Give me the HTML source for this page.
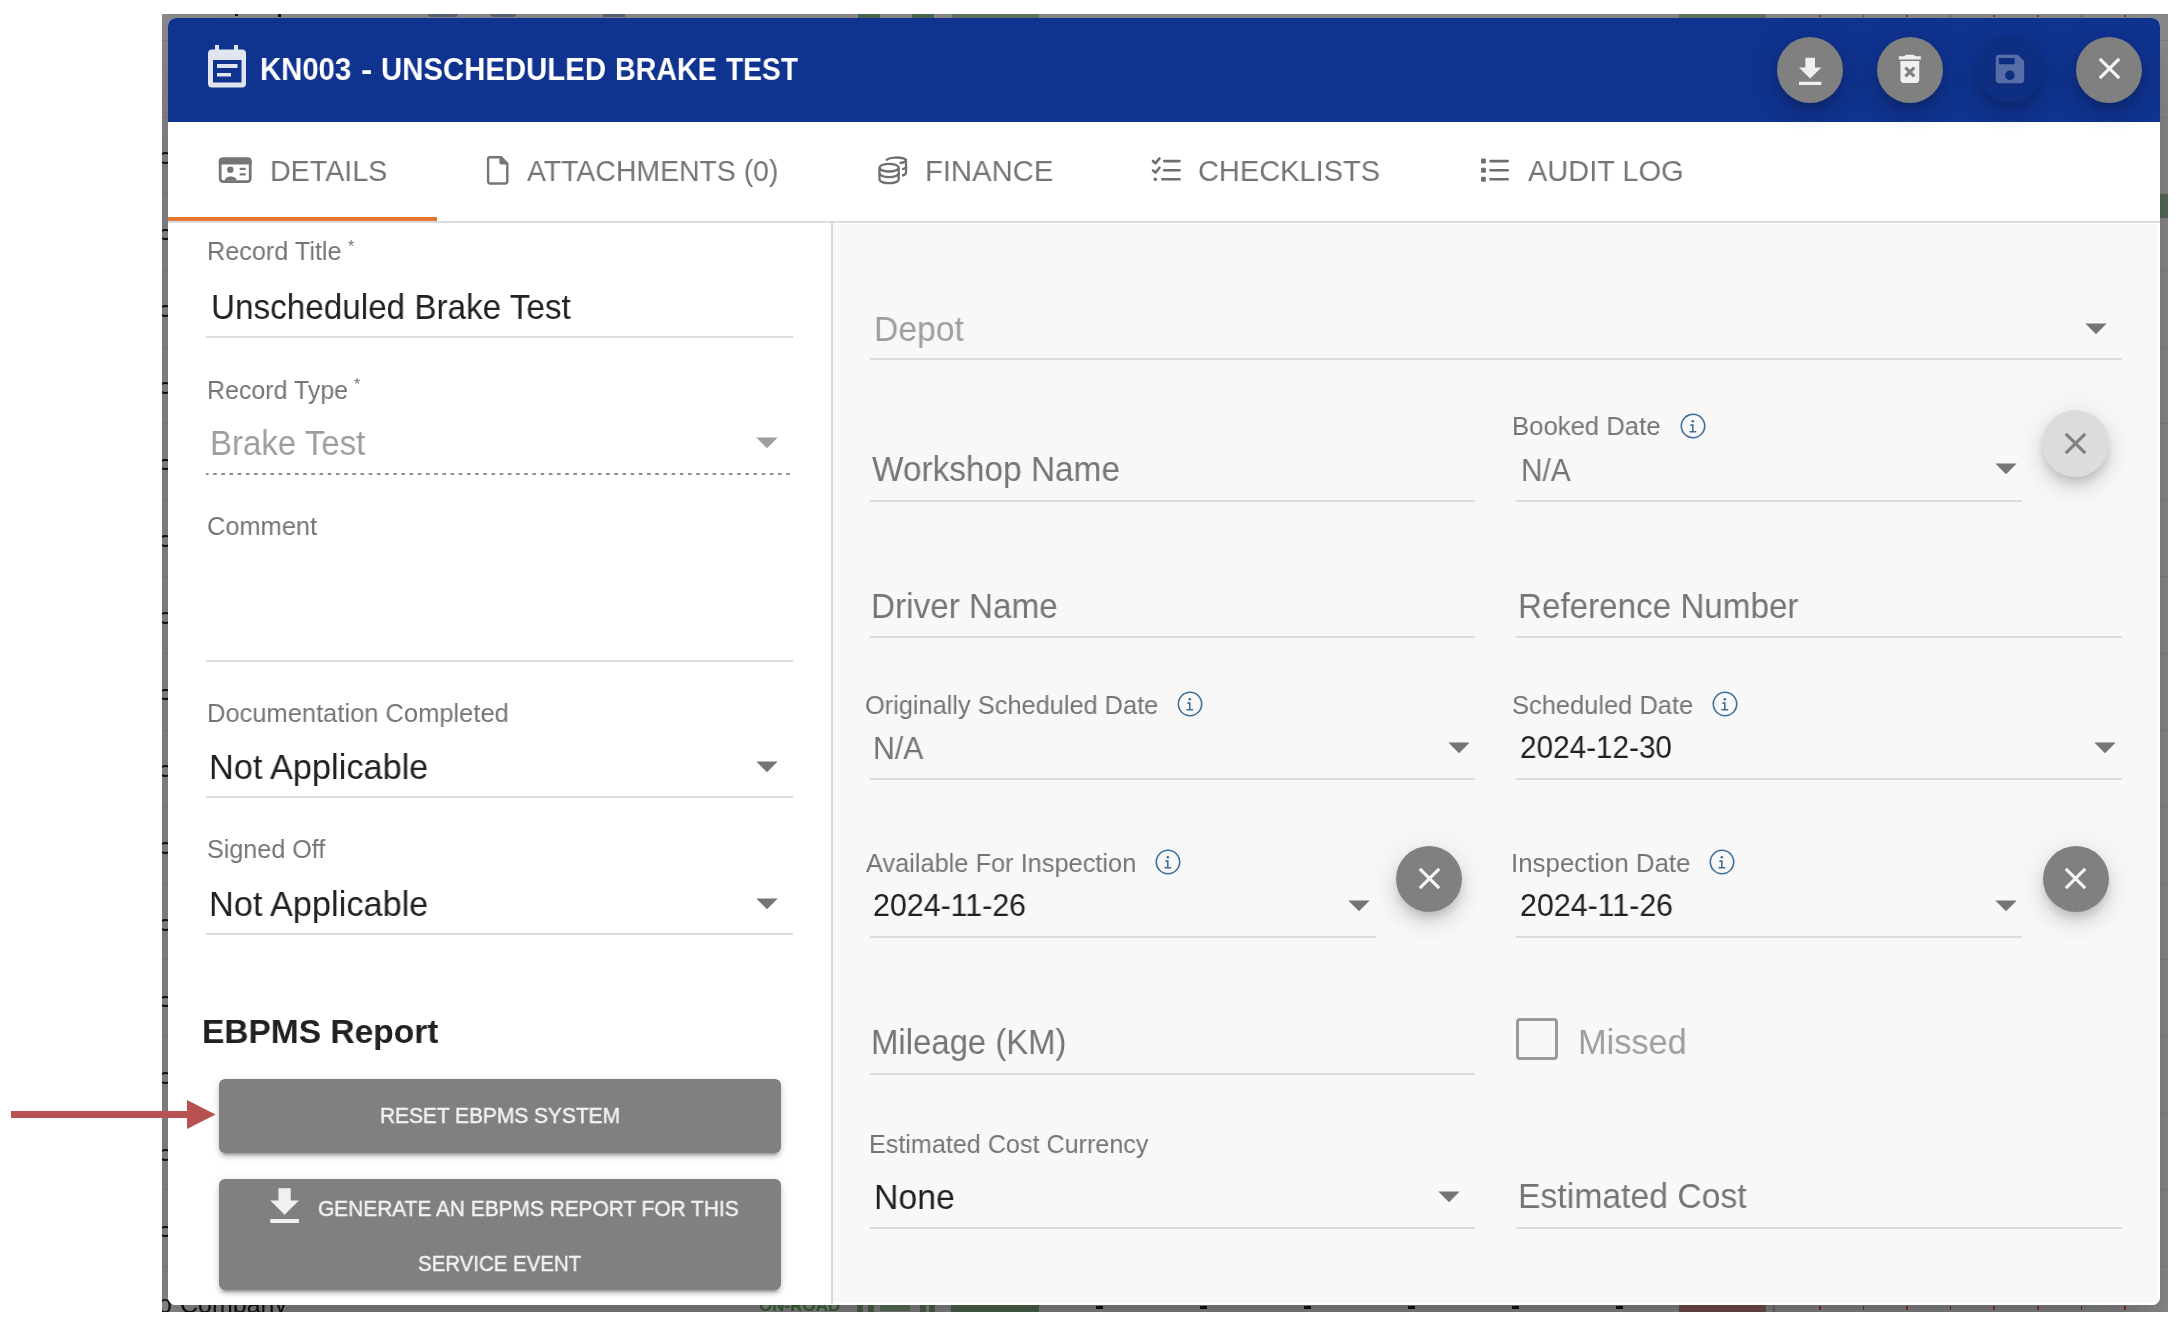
<!DOCTYPE html>
<html><head><meta charset="utf-8"><style>
html,body{margin:0;padding:0;background:#fff;width:2178px;height:1322px;overflow:hidden;}
body{position:relative;font-family:"Liberation Sans", sans-serif;}
.t{position:absolute;white-space:nowrap;will-change:transform;}
.r{position:absolute;}
</style></head><body>
<div class="r" style="left:162px;top:14px;width:2006px;height:1298px;overflow:hidden;background:#8c8c8c;"><div class="r" style="left:0.0px;top:26.1px;width:2006px;height:1.2px;background:rgba(0,0,0,0.07);"></div>
<div class="r" style="left:0.0px;top:102.7px;width:2006px;height:1.2px;background:rgba(0,0,0,0.07);"></div>
<div class="r" style="left:0.0px;top:179.3px;width:2006px;height:1.2px;background:rgba(0,0,0,0.07);"></div>
<div class="r" style="left:0.0px;top:255.9px;width:2006px;height:1.2px;background:rgba(0,0,0,0.07);"></div>
<div class="r" style="left:0.0px;top:332.5px;width:2006px;height:1.2px;background:rgba(0,0,0,0.07);"></div>
<div class="r" style="left:0.0px;top:409.1px;width:2006px;height:1.2px;background:rgba(0,0,0,0.07);"></div>
<div class="r" style="left:0.0px;top:485.7px;width:2006px;height:1.2px;background:rgba(0,0,0,0.07);"></div>
<div class="r" style="left:0.0px;top:562.3px;width:2006px;height:1.2px;background:rgba(0,0,0,0.07);"></div>
<div class="r" style="left:0.0px;top:638.9px;width:2006px;height:1.2px;background:rgba(0,0,0,0.07);"></div>
<div class="r" style="left:0.0px;top:715.5px;width:2006px;height:1.2px;background:rgba(0,0,0,0.07);"></div>
<div class="r" style="left:0.0px;top:792.1px;width:2006px;height:1.2px;background:rgba(0,0,0,0.07);"></div>
<div class="r" style="left:0.0px;top:868.7px;width:2006px;height:1.2px;background:rgba(0,0,0,0.07);"></div>
<div class="r" style="left:0.0px;top:945.3px;width:2006px;height:1.2px;background:rgba(0,0,0,0.07);"></div>
<div class="r" style="left:0.0px;top:1021.9px;width:2006px;height:1.2px;background:rgba(0,0,0,0.07);"></div>
<div class="r" style="left:0.0px;top:1098.5px;width:2006px;height:1.2px;background:rgba(0,0,0,0.07);"></div>
<div class="r" style="left:0.0px;top:1175.1px;width:2006px;height:1.2px;background:rgba(0,0,0,0.07);"></div>
<div class="r" style="left:0.0px;top:1251.7px;width:2006px;height:1.2px;background:rgba(0,0,0,0.07);"></div>
<div class="r" style="left:0.0px;top:1328.3px;width:2006px;height:1.2px;background:rgba(0,0,0,0.07);"></div>
<div class="r" style="left:-2.7px;top:137.8px;width:12.4px;height:11.8px;background:transparent;box-sizing:border-box;border:2px solid #111;border-radius:50%;"></div>
<div class="r" style="left:-2.7px;top:214.5px;width:12.4px;height:11.8px;background:transparent;box-sizing:border-box;border:2px solid #111;border-radius:50%;"></div>
<div class="r" style="left:-2.7px;top:291.2px;width:12.4px;height:11.8px;background:transparent;box-sizing:border-box;border:2px solid #111;border-radius:50%;"></div>
<div class="r" style="left:-2.7px;top:367.9px;width:12.4px;height:11.8px;background:transparent;box-sizing:border-box;border:2px solid #111;border-radius:50%;"></div>
<div class="r" style="left:-2.7px;top:444.6px;width:12.4px;height:11.8px;background:transparent;box-sizing:border-box;border:2px solid #111;border-radius:50%;"></div>
<div class="r" style="left:-2.7px;top:521.3px;width:12.4px;height:11.8px;background:transparent;box-sizing:border-box;border:2px solid #111;border-radius:50%;"></div>
<div class="r" style="left:-2.7px;top:598.0px;width:12.4px;height:11.8px;background:transparent;box-sizing:border-box;border:2px solid #111;border-radius:50%;"></div>
<div class="r" style="left:-2.7px;top:674.7px;width:12.4px;height:11.8px;background:transparent;box-sizing:border-box;border:2px solid #111;border-radius:50%;"></div>
<div class="r" style="left:-2.7px;top:751.4px;width:12.4px;height:11.8px;background:transparent;box-sizing:border-box;border:2px solid #111;border-radius:50%;"></div>
<div class="r" style="left:-2.7px;top:828.1px;width:12.4px;height:11.8px;background:transparent;box-sizing:border-box;border:2px solid #111;border-radius:50%;"></div>
<div class="r" style="left:-2.7px;top:904.8px;width:12.4px;height:11.8px;background:transparent;box-sizing:border-box;border:2px solid #111;border-radius:50%;"></div>
<div class="r" style="left:-2.7px;top:981.5px;width:12.4px;height:11.8px;background:transparent;box-sizing:border-box;border:2px solid #111;border-radius:50%;"></div>
<div class="r" style="left:-2.7px;top:1058.2px;width:12.4px;height:11.8px;background:transparent;box-sizing:border-box;border:2px solid #111;border-radius:50%;"></div>
<div class="r" style="left:-2.7px;top:1134.9px;width:12.4px;height:11.8px;background:transparent;box-sizing:border-box;border:2px solid #111;border-radius:50%;"></div>
<div class="r" style="left:-2.7px;top:1211.6px;width:12.4px;height:11.8px;background:transparent;box-sizing:border-box;border:2px solid #111;border-radius:50%;"></div>
<div class="r" style="left:73.0px;top:0.0px;width:3px;height:2px;background:#111;"></div>
<div class="r" style="left:116.0px;top:0.0px;width:3px;height:2.5px;background:#111;"></div>
<div class="r" style="left:266.0px;top:0.0px;width:30px;height:3px;background:rgba(40,60,90,0.5);border-radius:0 0 10px 10px;"></div>
<div class="r" style="left:328.0px;top:0.0px;width:26px;height:3px;background:rgba(40,60,90,0.5);border-radius:0 0 12px 12px;"></div>
<div class="r" style="left:441.0px;top:0.0px;width:22px;height:3px;background:rgba(40,60,90,0.5);"></div>
<div class="r" style="left:696.0px;top:0.0px;width:22px;height:3.5px;background:#4d6b4d;"></div>
<div class="r" style="left:750.0px;top:0.0px;width:22px;height:3.5px;background:#4d6b4d;"></div>
<div class="r" style="left:790.0px;top:0.0px;width:87px;height:4px;background:#5e785e;"></div>
<div class="r" style="left:1517.0px;top:0.0px;width:87px;height:4px;background:#5e785e;"></div>
<div class="r" style="left:1657.0px;top:1.0px;width:1.6px;height:2.2px;background:#9a3a2a;"></div>
<div class="r" style="left:1700.6px;top:1.0px;width:1.6px;height:2.2px;background:#9a3a2a;"></div>
<div class="r" style="left:1744.2px;top:1.0px;width:1.6px;height:2.2px;background:#9a3a2a;"></div>
<div class="r" style="left:1787.8px;top:1.0px;width:1.6px;height:2.2px;background:#9a3a2a;"></div>
<div class="r" style="left:1831.4px;top:1.0px;width:1.6px;height:2.2px;background:#9a3a2a;"></div>
<div class="r" style="left:1875.0px;top:1.0px;width:1.6px;height:2.2px;background:#9a3a2a;"></div>
<div class="r" style="left:1918.6px;top:1.0px;width:1.6px;height:2.2px;background:#9a3a2a;"></div>
<div class="r" style="left:1962.2px;top:1.0px;width:1.6px;height:2.2px;background:#9a3a2a;"></div>
<div class="r" style="left:1998.0px;top:180.0px;width:8px;height:24px;background:#566e56;"></div>
<div class="t" style="left:597.0px;top:1282.6px;font-size:17px;line-height:17px;font-weight:700;color:#356b35;">ON-ROAD</div>
<div class="r" style="left:695.0px;top:1291.0px;width:6px;height:7px;background:#4d684d;"></div>
<div class="r" style="left:706.0px;top:1291.0px;width:6px;height:7px;background:#4d684d;"></div>
<div class="r" style="left:718.0px;top:1291.0px;width:30px;height:6px;background:rgba(40,90,40,0.45);"></div>
<div class="r" style="left:758.0px;top:1291.0px;width:6px;height:7px;background:#4d684d;"></div>
<div class="r" style="left:767.0px;top:1291.0px;width:6px;height:7px;background:#4d684d;"></div>
<div class="r" style="left:789.0px;top:1291.0px;width:88px;height:7px;background:#4f6a4f;"></div>
<div class="r" style="left:934.0px;top:1292.0px;width:7px;height:2.5px;background:#111;"></div>
<div class="r" style="left:1038.0px;top:1292.0px;width:7px;height:2.5px;background:#111;"></div>
<div class="r" style="left:1142.0px;top:1292.0px;width:7px;height:2.5px;background:#111;"></div>
<div class="r" style="left:1246.0px;top:1292.0px;width:7px;height:2.5px;background:#111;"></div>
<div class="r" style="left:1350.0px;top:1292.0px;width:7px;height:2.5px;background:#111;"></div>
<div class="r" style="left:1454.0px;top:1292.0px;width:7px;height:2.5px;background:#111;"></div>
<div class="r" style="left:1517.0px;top:1291.0px;width:87px;height:7px;background:#7a5252;"></div>
<div class="r" style="left:1611.0px;top:1291.0px;width:1.5px;height:7px;background:rgba(0,0,0,0.2);"></div>
<div class="r" style="left:1657.0px;top:1291.5px;width:1.6px;height:4px;background:#8a3020;background-image:linear-gradient(#8a3020 40%,transparent 40%,transparent 60%,#8a3020 60%);background-color:transparent;"></div>
<div class="r" style="left:1700.6px;top:1291.5px;width:1.6px;height:4px;background:#8a3020;background-image:linear-gradient(#8a3020 40%,transparent 40%,transparent 60%,#8a3020 60%);background-color:transparent;"></div>
<div class="r" style="left:1744.2px;top:1291.5px;width:1.6px;height:4px;background:#8a3020;background-image:linear-gradient(#8a3020 40%,transparent 40%,transparent 60%,#8a3020 60%);background-color:transparent;"></div>
<div class="r" style="left:1787.8px;top:1291.5px;width:1.6px;height:4px;background:#8a3020;background-image:linear-gradient(#8a3020 40%,transparent 40%,transparent 60%,#8a3020 60%);background-color:transparent;"></div>
<div class="r" style="left:1831.4px;top:1291.5px;width:1.6px;height:4px;background:#8a3020;background-image:linear-gradient(#8a3020 40%,transparent 40%,transparent 60%,#8a3020 60%);background-color:transparent;"></div>
<div class="r" style="left:1875.0px;top:1291.5px;width:1.6px;height:4px;background:#8a3020;background-image:linear-gradient(#8a3020 40%,transparent 40%,transparent 60%,#8a3020 60%);background-color:transparent;"></div>
<div class="r" style="left:1918.6px;top:1291.5px;width:1.6px;height:4px;background:#8a3020;background-image:linear-gradient(#8a3020 40%,transparent 40%,transparent 60%,#8a3020 60%);background-color:transparent;"></div>
<div class="r" style="left:1962.2px;top:1291.5px;width:1.6px;height:4px;background:#8a3020;background-image:linear-gradient(#8a3020 40%,transparent 40%,transparent 60%,#8a3020 60%);background-color:transparent;"></div>
<div class="t" style="left:-4.1px;top:1278.3px;font-size:25px;line-height:25px;color:#111;">o</div>
<div class="t" style="left:17.6px;top:1278.3px;font-size:25px;line-height:25px;color:#111;">Company</div>
<div class="r" style="left:6px;top:4px;width:1992px;height:1287px;border-radius:8px;background:#fff;box-shadow:0 22px 30px -14px rgba(0,0,0,.15),0 48px 76px 6px rgba(0,0,0,.1),0 18px 92px 16px rgba(0,0,0,.09);"></div></div>
<div class="r" style="left:168px;top:18px;width:1992px;height:1287px;background:#ffffff;border-radius:8px;"></div>
<div class="r" style="left:168px;top:18px;width:1992px;height:104px;background:#10338f;border-radius:8px 8px 0 0;"></div>
<svg class="r" style="left:207px;top:44px" width="40" height="45" viewBox="0 0 40 45">
<rect x="1" y="5.5" width="38" height="38" rx="4" fill="#e1e5f0"/>
<rect x="8" y="1" width="4" height="6" fill="#e1e5f0"/><rect x="27" y="1" width="4" height="6" fill="#e1e5f0"/>
<rect x="6" y="16" width="28.5" height="22.5" fill="#10338f"/>
<rect x="10" y="20" width="20.5" height="4" fill="#e1e5f0"/><rect x="10" y="29" width="14" height="3.5" fill="#e1e5f0"/>
</svg>
<div class="t" style="left:260.27px;top:52px;font-size:30.81px;line-height:normal;color:#ffffff;font-weight:700;transform:scaleX(0.9515);transform-origin:0 0;">KN003</div>
<div class="t" style="left:360.64px;top:52px;font-size:30.81px;line-height:normal;color:#ffffff;font-weight:700;transform:scaleX(1.0996);transform-origin:0 0;">-</div>
<div class="t" style="left:380.92px;top:52px;font-size:30.81px;line-height:normal;color:#ffffff;font-weight:700;transform:scaleX(0.9528);transform-origin:0 0;">UNSCHEDULED</div>
<div class="t" style="left:615.01px;top:52px;font-size:30.81px;line-height:normal;color:#ffffff;font-weight:700;transform:scaleX(0.9286);transform-origin:0 0;">BRAKE</div>
<div class="t" style="left:726.30px;top:52px;font-size:30.81px;line-height:normal;color:#ffffff;font-weight:700;transform:scaleX(0.9148);transform-origin:0 0;">TEST</div>
<div class="r" style="left:1777.0px;top:37.0px;width:66px;height:66px;background:#808080;border-radius:50%;box-shadow:0 6px 10px -2px rgba(0,0,0,.15),0 12px 20px 0 rgba(0,0,0,.1),0 2px 36px 0 rgba(0,0,0,.09);"></div>
<div class="r" style="left:1877.0px;top:37.0px;width:66px;height:66px;background:#808080;border-radius:50%;box-shadow:0 6px 10px -2px rgba(0,0,0,.15),0 12px 20px 0 rgba(0,0,0,.1),0 2px 36px 0 rgba(0,0,0,.09);"></div>
<div class="r" style="left:1976.7px;top:37.0px;width:66px;height:66px;background:#0e2e82;border-radius:50%;box-shadow:0 6px 10px -2px rgba(0,0,0,.15),0 12px 20px 0 rgba(0,0,0,.1),0 2px 36px 0 rgba(0,0,0,.09);"></div>
<div class="r" style="left:2076.4px;top:37.0px;width:66px;height:66px;background:#808080;border-radius:50%;box-shadow:0 6px 10px -2px rgba(0,0,0,.15),0 12px 20px 0 rgba(0,0,0,.1),0 2px 36px 0 rgba(0,0,0,.09);"></div>
<svg class="r" style="left:1791.2px;top:52.5px" width="38.4" height="38.4" viewBox="0 0 24 24"><path d="M19 9h-4V3H9v6H5l7 7 7-7zM5 18v2h14v-2H5z" fill="#f0f0f0"/></svg>
<svg class="r" style="left:1891.0px;top:50.1px" width="37.7" height="37.7" viewBox="0 0 24 24"><path d="M6 19c0 1.1.9 2 2 2h8c1.1 0 2-.9 2-2V7H6v12zm2.46-7.12l1.41-1.41L12 12.59l2.12-2.12 1.41 1.41L13.41 14l2.12 2.12-1.41 1.41L12 15.41l-2.12 2.12-1.41-1.41L10.59 14l-2.13-2.12zM15.5 4l-1-1h-5l-1 1H5v2h14V4z" fill="#f0f0f0"/></svg>
<svg class="r" style="left:1990.5px;top:50.1px" width="37.9" height="37.9" viewBox="0 0 24 24"><path d="M17 3H5c-1.11 0-2 .9-2 2v14c0 1.1.89 2 2 2h14c1.1 0 2-.9 2-2V7l-4-4zm-5 16c-1.66 0-3-1.34-3-3s1.34-3 3-3 3 1.34 3 3-1.34 3-3 3zm3-10H5V5h10v4z" fill="rgba(255,255,255,0.3)"/></svg>
<svg class="r" style="left:2090.8px;top:50.4px" width="37.0" height="37.0" viewBox="0 0 24 24"><path d="M19 6.41L17.59 5 12 10.59 6.41 5 5 6.41 10.59 12 5 17.59 6.41 19 12 13.41 17.59 19 19 17.59 13.41 12z" fill="#f5f5f5"/></svg>
<div class="r" style="left:168px;top:221px;width:1992px;height:2px;background:#dcdcdc;"></div>
<div class="r" style="left:168px;top:217px;width:269px;height:4px;background:#e37634;"></div>
<div class="t" style="left:269.86px;top:154px;font-size:29.94px;line-height:normal;color:#757575;font-weight:400;transform:scaleX(0.9573);transform-origin:0 0;">DETAILS</div>
<div class="t" style="left:527.30px;top:154px;font-size:29.94px;line-height:normal;color:#757575;font-weight:400;transform:scaleX(0.9488);transform-origin:0 0;">ATTACHMENTS (0)</div>
<div class="t" style="left:924.52px;top:154px;font-size:29.94px;line-height:normal;color:#757575;font-weight:400;transform:scaleX(0.9763);transform-origin:0 0;">FINANCE</div>
<div class="t" style="left:1198.14px;top:154px;font-size:29.94px;line-height:normal;color:#757575;font-weight:400;transform:scaleX(0.9684);transform-origin:0 0;">CHECKLISTS</div>
<div class="t" style="left:1528.00px;top:154px;font-size:29.94px;line-height:normal;color:#757575;font-weight:400;transform:scaleX(0.9677);transform-origin:0 0;">AUDIT LOG</div>
<svg class="r" style="left:200px;top:140px" width="60" height="50" viewBox="0 0 60 50">
<rect x="20.18" y="18.98" width="30.05" height="22.65" rx="3" fill="none" stroke="#757575" stroke-width="2.75"/>
<rect x="18.8" y="17.6" width="32.8" height="6.7" rx="3.5" fill="#757575"/><rect x="18.8" y="21" width="32.8" height="3.3" fill="#757575"/>
<circle cx="30.3" cy="29.8" r="3.2" fill="#757575"/>
<path d="M24.9 40.6 C25.2 35.2 36.4 35.2 36.7 40.6 Z" fill="#757575"/>
<path d="M40.65 28.9 H44.75 M40.65 34.4 H44.75" fill="none" stroke="#757575" stroke-width="2.3" stroke-linecap="round"/>
</svg>
<svg class="r" style="left:475px;top:145px" width="50" height="50" viewBox="0 0 50 50">
<path d="M15.2 12.2 H26 L32.3 18.5 V36.4 a2.1 2.1 0 0 1 -2.1 2.1 H15.2 a2.1 2.1 0 0 1 -2.1 -2.1 V14.3 a2.1 2.1 0 0 1 2.1 -2.1 Z" fill="none" stroke="#757575" stroke-width="2.4" stroke-linejoin="round"/>
<path d="M24.4 12 L32.6 19.4 H26.4 a2 2 0 0 1 -2 -2 Z" fill="#757575"/>
</svg>
<svg class="r" style="left:860px;top:145px" width="80" height="50" viewBox="0 0 80 50">
<g fill="none" stroke="#6f6f6f" stroke-width="2.3" stroke-linecap="butt">
<ellipse cx="29.1" cy="22.7" rx="9.6" ry="3.8"/>
<path d="M19.5 22.7 V34.4 a9.6 3.8 0 0 0 19.2 0 V22.7"/>
<path d="M19.5 28.3 a9.6 3.8 0 0 0 19.2 0"/>
<path d="M26.2 15.6 A10.3 3.5 0 0 1 46 14.75 V28 A10.3 3.5 0 0 1 42 30.6"/>
<path d="M46 14.75 A10.3 3.5 0 0 1 39.5 18.1"/>
<path d="M46 21 A10.3 3.2 0 0 1 42 24.2"/>
</g></svg>
<svg class="r" style="left:1140px;top:145px" width="60" height="50" viewBox="0 0 60 50">
<g fill="none" stroke="#6f6f6f" stroke-width="2.6" stroke-linecap="round" stroke-linejoin="round">
<path d="M13 16 L15.4 18.4 L19.5 13.4"/><path d="M13 25.3 L15.4 27.7 L19.5 22.7"/>
<path d="M24.2 16.1 H39.5"/><path d="M24.2 25.3 H39.5"/><path d="M22.3 34.2 H39.5"/>
</g><circle cx="15.3" cy="34.2" r="1.75" fill="#6f6f6f"/></svg>
<svg class="r" style="left:1470px;top:145px" width="60" height="50" viewBox="0 0 60 50">
<g fill="#6f6f6f"><rect x="11" y="13.6" width="4.9" height="4.9" rx="1.2"/><rect x="11" y="22.8" width="4.9" height="4.9" rx="1.2"/><rect x="11" y="31.8" width="4.9" height="4.9" rx="1.2"/></g>
<g fill="none" stroke="#6f6f6f" stroke-width="2.6" stroke-linecap="round"><path d="M20.6 16.1 H37.7"/><path d="M20.6 25.3 H37.7"/><path d="M20.6 34.2 H37.7"/></g></svg>
<div class="r" style="left:831px;top:223px;width:2px;height:1081px;background:#d9d9d9;"></div>
<div class="r" style="left:833px;top:224px;width:1325px;height:1079px;background:#f8f8f8;border-bottom-right-radius:6px;"></div>
<div class="t" style="left:206.93px;top:237px;font-size:25.87px;line-height:normal;color:#757575;font-weight:400;transform:scaleX(0.9754);transform-origin:0 0;">Record Title</div>
<div class="t" style="left:347.60px;top:239.45px;font-size:16.00px;line-height:16.00px;color:#757575;font-weight:400;letter-spacing:0px;">*</div>
<div class="t" style="left:210.82px;top:288px;font-size:34.59px;line-height:normal;color:#212121;font-weight:400;transform:scaleX(0.9616);transform-origin:0 0;">Unscheduled Brake Test</div>
<div class="r" style="left:206px;top:336px;width:587px;height:2px;background:#dcdcdc;"></div>
<div class="t" style="left:206.55px;top:376px;font-size:25.87px;line-height:normal;color:#757575;font-weight:400;transform:scaleX(0.9651);transform-origin:0 0;">Record Type</div>
<div class="t" style="left:353.60px;top:377.45px;font-size:16.00px;line-height:16.00px;color:#757575;font-weight:400;letter-spacing:0px;">*</div>
<div class="t" style="left:209.92px;top:424px;font-size:34.59px;line-height:normal;color:#9e9e9e;font-weight:400;transform:scaleX(0.9550);transform-origin:0 0;">Brake Test</div>
<svg class="r" style="left:756.1px;top:437px" width="22" height="12" viewBox="0 0 22 12"><path d="M0.3 0.5 H21.7 L11 11.2 Z" fill="#9e9e9e"/></svg>
<div class="r" style="left:206px;top:473px;width:587px;height:2px;background-image:linear-gradient(to right,#8f8f8f 3.4px,transparent 3.4px);background-size:8.2px 2px;background-position:-1.1px 0;"></div>
<div class="t" style="left:206.71px;top:512px;font-size:25.87px;line-height:normal;color:#757575;font-weight:400;transform:scaleX(0.9818);transform-origin:0 0;">Comment</div>
<div class="r" style="left:206px;top:660px;width:587px;height:2px;background:#dcdcdc;"></div>
<div class="t" style="left:206.51px;top:699px;font-size:25.87px;line-height:normal;color:#757575;font-weight:400;transform:scaleX(0.9856);transform-origin:0 0;">Documentation Completed</div>
<div class="t" style="left:209.42px;top:748px;font-size:34.59px;line-height:normal;color:#212121;font-weight:400;transform:scaleX(0.9920);transform-origin:0 0;">Not Applicable</div>
<svg class="r" style="left:756.1px;top:761px" width="22" height="12" viewBox="0 0 22 12"><path d="M0.3 0.5 H21.7 L11 11.2 Z" fill="#757575"/></svg>
<div class="r" style="left:206px;top:796px;width:587px;height:2px;background:#dcdcdc;"></div>
<div class="t" style="left:207.31px;top:835px;font-size:25.87px;line-height:normal;color:#757575;font-weight:400;transform:scaleX(0.9714);transform-origin:0 0;">Signed Off</div>
<div class="t" style="left:209.42px;top:885px;font-size:34.59px;line-height:normal;color:#212121;font-weight:400;transform:scaleX(0.9920);transform-origin:0 0;">Not Applicable</div>
<svg class="r" style="left:756.1px;top:898px" width="22" height="12" viewBox="0 0 22 12"><path d="M0.3 0.5 H21.7 L11 11.2 Z" fill="#757575"/></svg>
<div class="r" style="left:206px;top:933px;width:587px;height:2px;background:#dcdcdc;"></div>
<div class="t" style="left:201.91px;top:1012px;font-size:33.87px;line-height:normal;color:#212121;font-weight:700;transform:scaleX(0.9895);transform-origin:0 0;">EBPMS Report</div>
<div class="r" style="left:219px;top:1079px;width:562px;height:74px;background:#808080;border-radius:6px;box-shadow:0 6px 2px -4px rgba(0,0,0,.2),0 4px 4px 0 rgba(0,0,0,.14),0 2px 10px 0 rgba(0,0,0,.12);"></div>
<div class="t" style="left:379.57px;top:1103px;font-size:21.95px;line-height:normal;color:#f2f2f2;font-weight:400;transform:scaleX(0.9524);transform-origin:0 0;-webkit-text-stroke:0.45px #f2f2f2;">RESET EBPMS SYSTEM</div>
<div class="r" style="left:219px;top:1179px;width:562px;height:111px;background:#808080;border-radius:6px;box-shadow:0 6px 2px -4px rgba(0,0,0,.2),0 4px 4px 0 rgba(0,0,0,.14),0 2px 10px 0 rgba(0,0,0,.12);"></div>
<svg class="r" style="left:259.9px;top:1181.6px" width="49.2" height="49.2" viewBox="0 0 24 24"><path d="M19 9h-4V3H9v6H5l7 7 7-7zM5 18v2h14v-2H5z" fill="#f0f0f0"/></svg>
<div class="t" style="left:317.52px;top:1196px;font-size:21.95px;line-height:normal;color:#f2f2f2;font-weight:400;transform:scaleX(0.9515);transform-origin:0 0;-webkit-text-stroke:0.45px #f2f2f2;">GENERATE AN EBPMS REPORT FOR THIS</div>
<div class="t" style="left:417.96px;top:1251px;font-size:21.95px;line-height:normal;color:#f2f2f2;font-weight:400;transform:scaleX(0.9313);transform-origin:0 0;-webkit-text-stroke:0.45px #f2f2f2;">SERVICE EVENT</div>
<svg class="r" style="left:0px;top:1090px" width="230" height="50" viewBox="0 0 230 50"><rect x="11" y="21" width="180" height="7" fill="#b85252"/><path d="M187 10 L215.6 24.5 L187 39 Z" fill="#b85252"/></svg>
<div class="t" style="left:873.97px;top:310px;font-size:34.59px;line-height:normal;color:#9e9e9e;font-weight:400;transform:scaleX(0.9730);transform-origin:0 0;">Depot</div>
<svg class="r" style="left:2085px;top:322.8px" width="22" height="12" viewBox="0 0 22 12"><path d="M0.3 0.5 H21.7 L11 11.2 Z" fill="#757575"/></svg>
<div class="r" style="left:870px;top:358px;width:1252px;height:2px;background:#dcdcdc;"></div>
<div class="t" style="left:872.30px;top:450px;font-size:34.59px;line-height:normal;color:#757575;font-weight:400;transform:scaleX(0.9653);transform-origin:0 0;">Workshop Name</div>
<div class="r" style="left:870px;top:500px;width:605px;height:2px;background:#dcdcdc;"></div>
<div class="t" style="left:1512.09px;top:412px;font-size:25.87px;line-height:normal;color:#757575;font-weight:400;transform:scaleX(0.9931);transform-origin:0 0;">Booked Date</div>
<svg class="r" style="left:1678.50px;top:411.60px" width="28" height="28" viewBox="-14 -14 28 28"><circle cx="0" cy="0" r="11.7" fill="none" stroke="#3e6e98" stroke-width="1.6"/><circle cx="-0.2" cy="-4.7" r="1.3" fill="#3e6e98"/><path d="M-2.6 -0.9 H-0.2 V5.6" fill="none" stroke="#3e6e98" stroke-width="1.6"/><path d="M-3 5.7 H2.6" fill="none" stroke="#3e6e98" stroke-width="1.5" stroke-linecap="round"/></svg>
<div class="t" style="left:1520.57px;top:453px;font-size:30.52px;line-height:normal;color:#757575;font-weight:400;transform:scaleX(0.9764);transform-origin:0 0;">N/A</div>
<svg class="r" style="left:1995px;top:463.2px" width="22" height="12" viewBox="0 0 22 12"><path d="M0.3 0.5 H21.7 L11 11.2 Z" fill="#757575"/></svg>
<div class="r" style="left:1516px;top:500px;width:506px;height:2px;background:#dcdcdc;"></div>
<div class="r" style="left:2042.3000000000002px;top:409.9px;width:67px;height:67px;background:#dcdcdc;border-radius:50%;box-shadow:0 6px 10px -2px rgba(0,0,0,.15),0 12px 20px 0 rgba(0,0,0,.1),0 2px 36px 0 rgba(0,0,0,.09);"></div>
<svg class="r" style="left:2057.3px;top:424.9px" width="37.0" height="37.0" viewBox="0 0 24 24"><path d="M19 6.41L17.59 5 12 10.59 6.41 5 5 6.41 10.59 12 5 17.59 6.41 19 12 13.41 17.59 19 19 17.59 13.41 12z" fill="#808080"/></svg>
<div class="t" style="left:870.50px;top:587px;font-size:34.59px;line-height:normal;color:#757575;font-weight:400;transform:scaleX(0.9625);transform-origin:0 0;">Driver Name</div>
<div class="r" style="left:870px;top:636px;width:605px;height:2px;background:#dcdcdc;"></div>
<div class="t" style="left:1517.61px;top:587px;font-size:34.59px;line-height:normal;color:#757575;font-weight:400;transform:scaleX(0.9600);transform-origin:0 0;">Reference Number</div>
<div class="r" style="left:1516px;top:636px;width:606px;height:2px;background:#dcdcdc;"></div>
<div class="t" style="left:865.11px;top:691px;font-size:25.87px;line-height:normal;color:#757575;font-weight:400;transform:scaleX(0.9809);transform-origin:0 0;">Originally Scheduled Date</div>
<svg class="r" style="left:1176.30px;top:690.30px" width="28" height="28" viewBox="-14 -14 28 28"><circle cx="0" cy="0" r="11.7" fill="none" stroke="#3e6e98" stroke-width="1.6"/><circle cx="-0.2" cy="-4.7" r="1.3" fill="#3e6e98"/><path d="M-2.6 -0.9 H-0.2 V5.6" fill="none" stroke="#3e6e98" stroke-width="1.6"/><path d="M-3 5.7 H2.6" fill="none" stroke="#3e6e98" stroke-width="1.5" stroke-linecap="round"/></svg>
<div class="t" style="left:872.64px;top:731px;font-size:30.52px;line-height:normal;color:#757575;font-weight:400;transform:scaleX(0.9908);transform-origin:0 0;">N/A</div>
<svg class="r" style="left:1448.1px;top:741.9px" width="22" height="12" viewBox="0 0 22 12"><path d="M0.3 0.5 H21.7 L11 11.2 Z" fill="#757575"/></svg>
<div class="r" style="left:870px;top:778px;width:605px;height:2px;background:#dcdcdc;"></div>
<div class="t" style="left:1511.80px;top:691px;font-size:25.87px;line-height:normal;color:#757575;font-weight:400;transform:scaleX(0.9843);transform-origin:0 0;">Scheduled Date</div>
<svg class="r" style="left:1710.70px;top:690.30px" width="28" height="28" viewBox="-14 -14 28 28"><circle cx="0" cy="0" r="11.7" fill="none" stroke="#3e6e98" stroke-width="1.6"/><circle cx="-0.2" cy="-4.7" r="1.3" fill="#3e6e98"/><path d="M-2.6 -0.9 H-0.2 V5.6" fill="none" stroke="#3e6e98" stroke-width="1.6"/><path d="M-3 5.7 H2.6" fill="none" stroke="#3e6e98" stroke-width="1.5" stroke-linecap="round"/></svg>
<div class="t" style="left:1520.11px;top:730px;font-size:30.52px;line-height:normal;color:#212121;font-weight:400;transform:scaleX(0.9737);transform-origin:0 0;">2024-12-30</div>
<svg class="r" style="left:2094.4px;top:741.9px" width="22" height="12" viewBox="0 0 22 12"><path d="M0.3 0.5 H21.7 L11 11.2 Z" fill="#757575"/></svg>
<div class="r" style="left:1516px;top:778px;width:606px;height:2px;background:#dcdcdc;"></div>
<div class="t" style="left:865.80px;top:849px;font-size:25.87px;line-height:normal;color:#757575;font-weight:400;transform:scaleX(0.9807);transform-origin:0 0;">Available For Inspection</div>
<svg class="r" style="left:1153.70px;top:848.40px" width="28" height="28" viewBox="-14 -14 28 28"><circle cx="0" cy="0" r="11.7" fill="none" stroke="#3e6e98" stroke-width="1.6"/><circle cx="-0.2" cy="-4.7" r="1.3" fill="#3e6e98"/><path d="M-2.6 -0.9 H-0.2 V5.6" fill="none" stroke="#3e6e98" stroke-width="1.6"/><path d="M-3 5.7 H2.6" fill="none" stroke="#3e6e98" stroke-width="1.5" stroke-linecap="round"/></svg>
<div class="t" style="left:872.88px;top:888px;font-size:30.52px;line-height:normal;color:#212121;font-weight:400;transform:scaleX(0.9947);transform-origin:0 0;">2024-11-26</div>
<svg class="r" style="left:1348.2px;top:899.8px" width="22" height="12" viewBox="0 0 22 12"><path d="M0.3 0.5 H21.7 L11 11.2 Z" fill="#757575"/></svg>
<div class="r" style="left:870px;top:936px;width:506px;height:2px;background:#dcdcdc;"></div>
<div class="r" style="left:1396.2px;top:845.9px;width:66px;height:66px;background:#808080;border-radius:50%;box-shadow:0 6px 10px -2px rgba(0,0,0,.15),0 12px 20px 0 rgba(0,0,0,.1),0 2px 36px 0 rgba(0,0,0,.09);"></div>
<svg class="r" style="left:1410.7px;top:860.4px" width="37.0" height="37.0" viewBox="0 0 24 24"><path d="M19 6.41L17.59 5 12 10.59 6.41 5 5 6.41 10.59 12 5 17.59 6.41 19 12 13.41 17.59 19 19 17.59 13.41 12z" fill="#f5f5f5"/></svg>
<div class="t" style="left:1510.58px;top:849px;font-size:25.87px;line-height:normal;color:#757575;font-weight:400;transform:scaleX(0.9988);transform-origin:0 0;">Inspection Date</div>
<svg class="r" style="left:1707.50px;top:848.40px" width="28" height="28" viewBox="-14 -14 28 28"><circle cx="0" cy="0" r="11.7" fill="none" stroke="#3e6e98" stroke-width="1.6"/><circle cx="-0.2" cy="-4.7" r="1.3" fill="#3e6e98"/><path d="M-2.6 -0.9 H-0.2 V5.6" fill="none" stroke="#3e6e98" stroke-width="1.6"/><path d="M-3 5.7 H2.6" fill="none" stroke="#3e6e98" stroke-width="1.5" stroke-linecap="round"/></svg>
<div class="t" style="left:1519.58px;top:888px;font-size:30.52px;line-height:normal;color:#212121;font-weight:400;transform:scaleX(0.9947);transform-origin:0 0;">2024-11-26</div>
<svg class="r" style="left:1995px;top:899.8px" width="22" height="12" viewBox="0 0 22 12"><path d="M0.3 0.5 H21.7 L11 11.2 Z" fill="#757575"/></svg>
<div class="r" style="left:1516px;top:936px;width:506px;height:2px;background:#dcdcdc;"></div>
<div class="r" style="left:2042.9px;top:845.9px;width:66px;height:66px;background:#808080;border-radius:50%;box-shadow:0 6px 10px -2px rgba(0,0,0,.15),0 12px 20px 0 rgba(0,0,0,.1),0 2px 36px 0 rgba(0,0,0,.09);"></div>
<svg class="r" style="left:2057.4px;top:860.4px" width="37.0" height="37.0" viewBox="0 0 24 24"><path d="M19 6.41L17.59 5 12 10.59 6.41 5 5 6.41 10.59 12 5 17.59 6.41 19 12 13.41 17.59 19 19 17.59 13.41 12z" fill="#f5f5f5"/></svg>
<div class="t" style="left:871.13px;top:1023px;font-size:34.59px;line-height:normal;color:#757575;font-weight:400;transform:scaleX(0.9508);transform-origin:0 0;">Mileage (KM)</div>
<div class="r" style="left:870px;top:1073px;width:605px;height:2px;background:#dcdcdc;"></div>
<div class="r" style="left:1516.3px;top:1018px;width:41.6px;height:41.6px;background:transparent;box-sizing:border-box;border:3.6px solid #9a9a9a;border-radius:4px;"></div>
<div class="t" style="left:1577.82px;top:1023px;font-size:34.59px;line-height:normal;color:#9e9e9e;font-weight:400;transform:scaleX(0.9931);transform-origin:0 0;">Missed</div>
<div class="t" style="left:869.23px;top:1130px;font-size:25.87px;line-height:normal;color:#757575;font-weight:400;transform:scaleX(0.9722);transform-origin:0 0;">Estimated Cost Currency</div>
<div class="t" style="left:873.66px;top:1178px;font-size:34.59px;line-height:normal;color:#212121;font-weight:400;transform:scaleX(0.9772);transform-origin:0 0;">None</div>
<svg class="r" style="left:1438px;top:1191px" width="22" height="12" viewBox="0 0 22 12"><path d="M0.3 0.5 H21.7 L11 11.2 Z" fill="#757575"/></svg>
<div class="r" style="left:870px;top:1227px;width:605px;height:2px;background:#dcdcdc;"></div>
<div class="t" style="left:1517.56px;top:1177px;font-size:34.59px;line-height:normal;color:#757575;font-weight:400;transform:scaleX(0.9756);transform-origin:0 0;">Estimated Cost</div>
<div class="r" style="left:1516px;top:1227px;width:606px;height:2px;background:#dcdcdc;"></div>
</body></html>
